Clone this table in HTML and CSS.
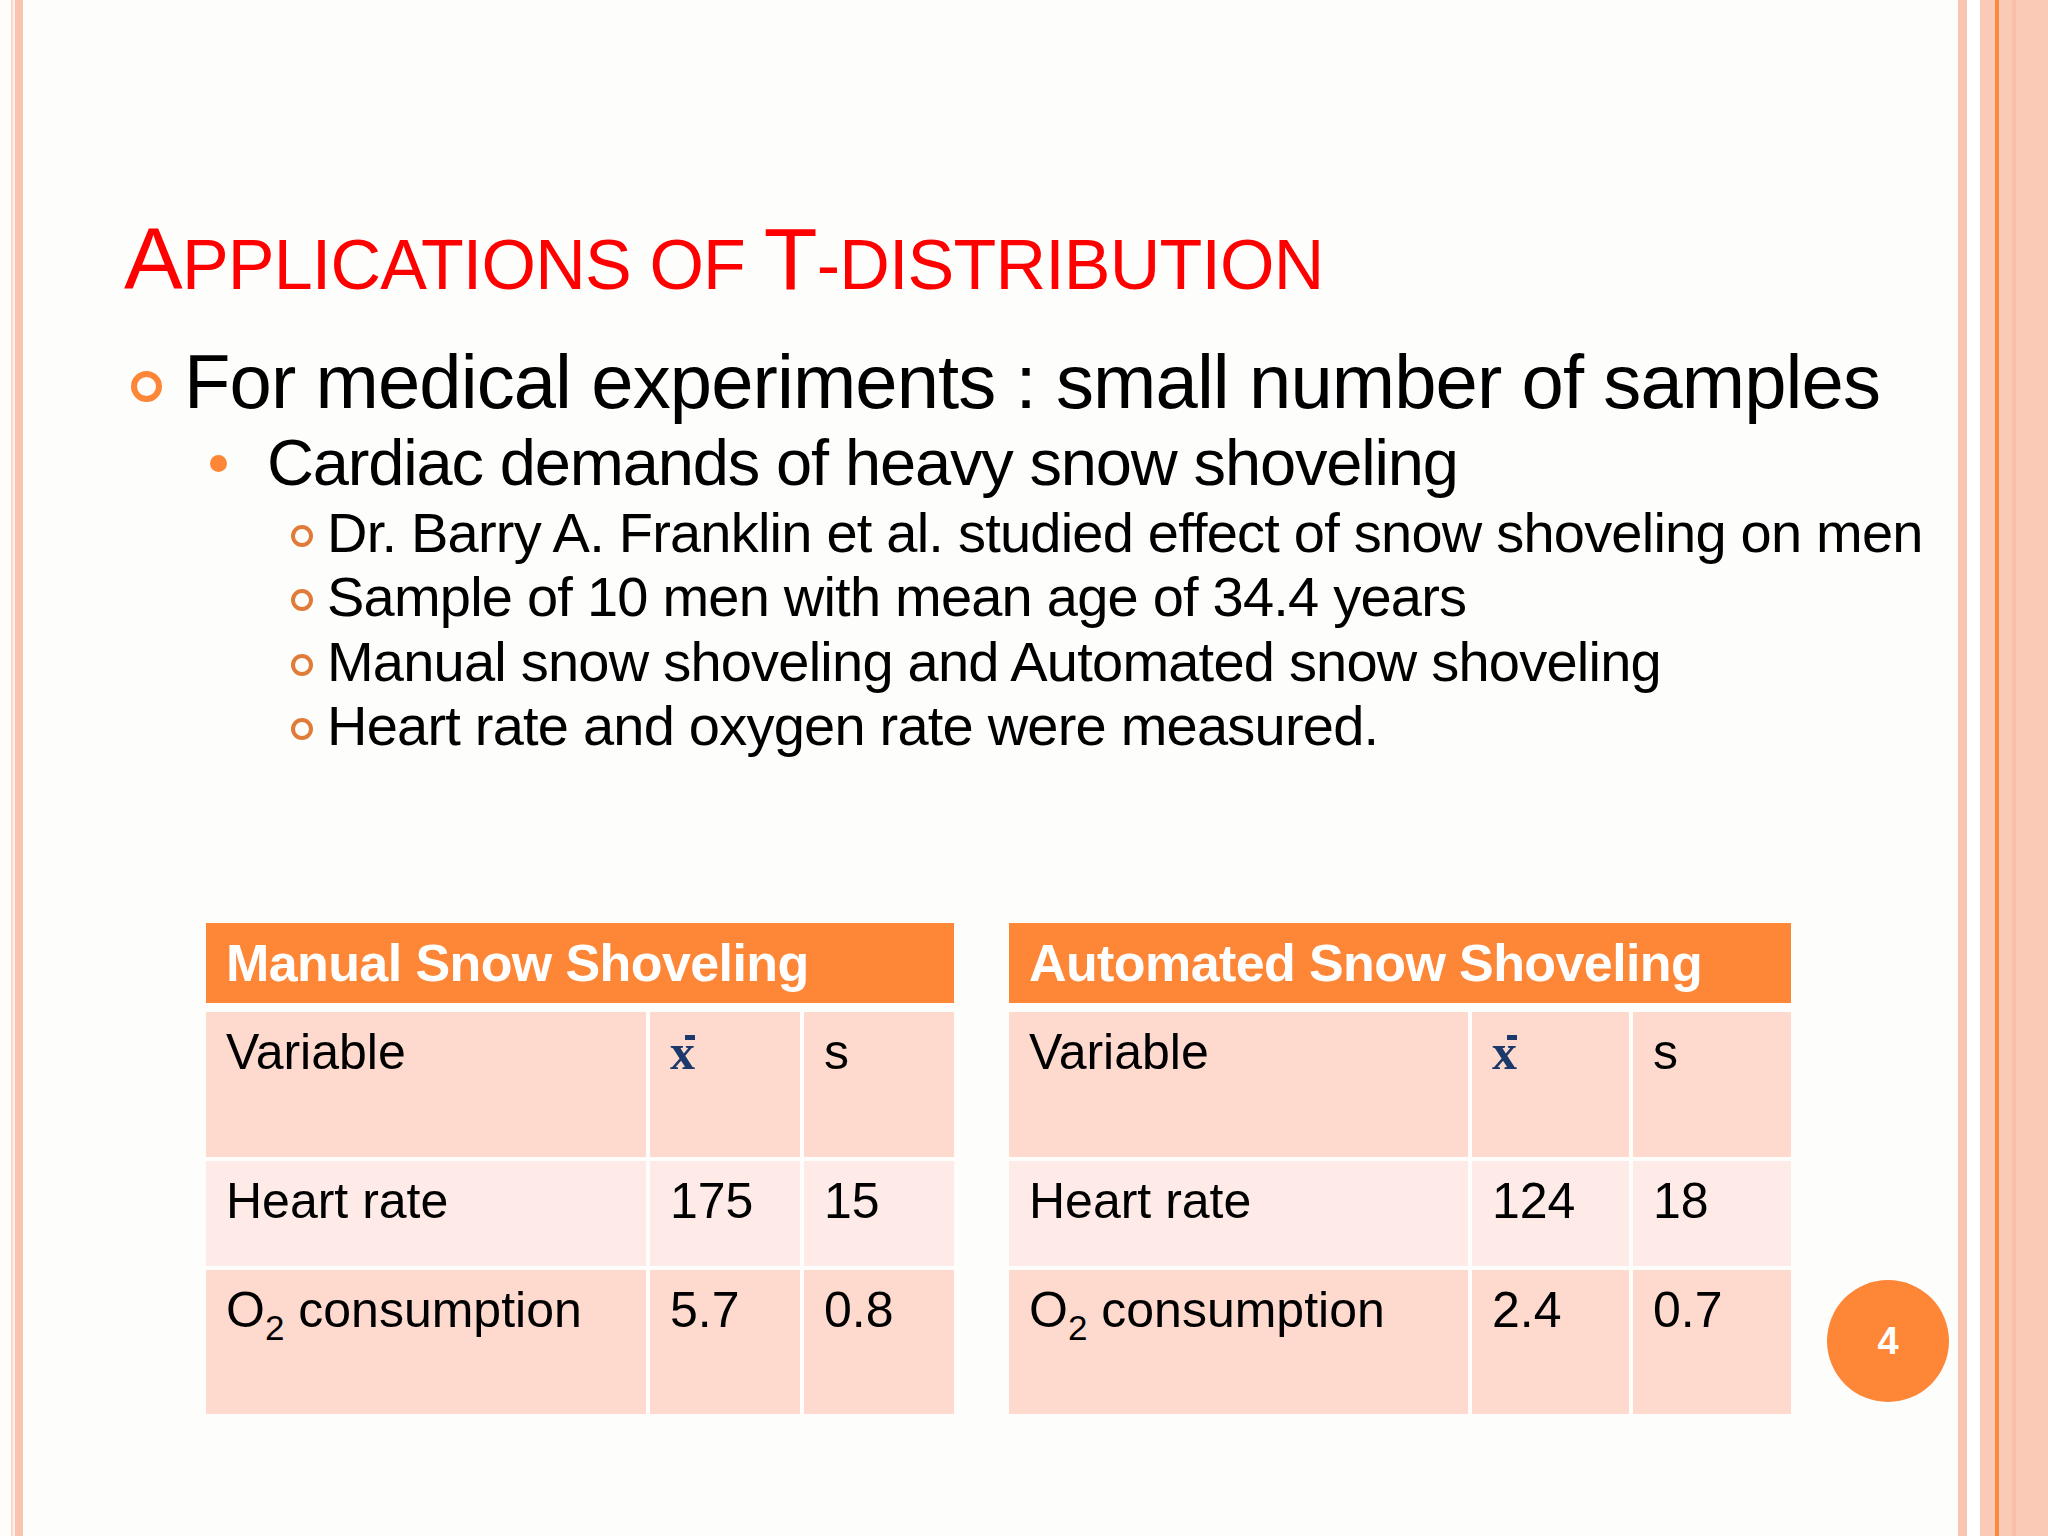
FILE: index.html
```html
<!DOCTYPE html>
<html lang="en">
<head>
<meta charset="utf-8">
<title>Applications of T-distribution</title>
<link rel="stylesheet" href="styles.css">
</head>
<body>
<div class="slide">
  <div class="frame-left">
    <div class="fl-gap"></div>
    <div class="fl-thin"></div>
    <div class="fl-light"></div>
    <div class="fl-thick"></div>
  </div>

  <main class="content">
    <h1 class="title">A<span class="sc">PPLICATIONS OF </span>T<span class="sc">-DISTRIBUTION</span></h1>

    <div class="item lvl1"><span class="mark ring-lg"></span><span class="txt">For medical experiments : small number of samples</span></div>
    <div class="item lvl2"><span class="mark dot"></span><span class="txt">Cardiac demands of heavy snow shoveling</span></div>
    <div class="lvl3-list">
      <div class="item lvl3"><span class="mark ring-sm"></span><span class="txt">Dr. Barry A. Franklin et al. studied effect of snow shoveling on men</span></div>
      <div class="item lvl3"><span class="mark ring-sm"></span><span class="txt">Sample of 10 men with mean age of 34.4 years</span></div>
      <div class="item lvl3"><span class="mark ring-sm"></span><span class="txt">Manual snow shoveling and Automated snow shoveling</span></div>
      <div class="item lvl3"><span class="mark ring-sm"></span><span class="txt">Heart rate and oxygen rate were measured.</span></div>
    </div>

    <div class="tables">
      <div class="tbl tbl-left">
        <div class="th">Manual Snow Shoveling</div>
        <div class="grid">
          <div class="cell">Variable</div>
          <div class="cell"><span class="xbar">x</span></div>
          <div class="cell">s</div>
          <div class="cell alt">Heart rate</div>
          <div class="cell alt">175</div>
          <div class="cell alt">15</div>
          <div class="cell">O<span class="sub">2</span> consumption</div>
          <div class="cell">5.7</div>
          <div class="cell">0.8</div>
        </div>
      </div>
      <div class="tbl tbl-right">
        <div class="th">Automated Snow Shoveling</div>
        <div class="grid">
          <div class="cell">Variable</div>
          <div class="cell"><span class="xbar">x</span></div>
          <div class="cell">s</div>
          <div class="cell alt">Heart rate</div>
          <div class="cell alt">124</div>
          <div class="cell alt">18</div>
          <div class="cell">O<span class="sub">2</span> consumption</div>
          <div class="cell">2.4</div>
          <div class="cell">0.7</div>
        </div>
      </div>
    </div>
  </main>

  <div class="frame-right">
    <div class="fr-a"></div>
    <div class="fr-white"></div>
    <div class="fr-b"></div>
    <div class="fr-line"></div>
    <div class="fr-c"></div>
    <div class="fr-dark"></div>
    <div class="fr-d"></div>
  </div>

  <div class="pagenum">4</div>
</div>
</body>
</html>
```

FILE: styles.css
```css
html, body {
  margin: 0;
  padding: 0;
}

body {
  width: 2048px;
  height: 1536px;
  overflow: hidden;
  background: #fdfdfb;
  font-family: "Liberation Sans", Arial, sans-serif;
  color: #000;
}

.slide {
  position: relative;
  display: flex;
  width: 2048px;
  height: 1536px;
}

/* left frame stripes */
.frame-left {
  display: flex;
  flex: none;
  width: 23px;
}
.fl-gap { width: 11px; }
.fl-thin { width: 2px; background: #fcd8cb; }
.fl-light { width: 2px; background: #fef1ec; }
.fl-thick { width: 8px; background: #f9c4ae; }

/* right frame stripes */
.frame-right {
  display: flex;
  flex: none;
  width: 90px;
}
.fr-a { width: 9px; background: #fac5b0; }
.fr-white { width: 13px; background: #ffffff; }
.fr-b { width: 15px; background: #fbcab7; }
.fr-line { width: 4px; background: #f98a40; }
.fr-c { width: 13px; background: #fbcab7; }
.fr-dark { width: 4px; background: #f8bfa8; }
.fr-d { flex: 1; background: #fbcab7; }

.content {
  flex: 1;
  min-width: 0;
  padding-top: 215px;
}

.title {
  margin: 0;
  padding-left: 101px;
  font-size: 88px;
  line-height: 88px;
  font-weight: normal;
  color: #ff0000;
  letter-spacing: -0.8px;
  white-space: nowrap;
}
.title .sc {
  font-size: 70px;
}

.item {
  display: flex;
  align-items: flex-start;
  white-space: nowrap;
}
.mark {
  flex: none;
  display: block;
  box-sizing: border-box;
  border-radius: 50%;
}

.lvl1 {
  margin-top: 35px;
  padding-left: 108px;
  font-size: 76px;
  line-height: 76px;
  letter-spacing: -0.9px;
}
.ring-lg {
  width: 31px;
  height: 31px;
  border: 6px solid #fd8637;
  margin-top: 27px;
  margin-right: 22px;
}

.lvl2 {
  margin-top: 10px;
  padding-left: 187px;
  font-size: 65px;
  line-height: 65px;
  letter-spacing: -1.15px;
}
.dot {
  width: 17px;
  height: 17px;
  background: #fd8637;
  margin-top: 25px;
  margin-right: 40px;
}

.lvl3-list {
  margin-top: 6px;
}
.lvl3 {
  padding-left: 268px;
  font-size: 56px;
  line-height: 64.4px;
  letter-spacing: -0.78px;
}
.ring-sm {
  width: 22px;
  height: 22px;
  border: 4px solid #e07b39;
  margin-top: 24px;
  margin-right: 14px;
}

/* tables */
.tables {
  display: flex;
  align-items: flex-start;
  gap: 55px;
  margin-top: 164px;
  padding-left: 183px;
}

.tbl {
  display: flex;
  flex-direction: column;
}

.th {
  height: 80px;
  margin-bottom: 9px;
  padding-left: 20px;
  background: #fd8637;
  color: #ffffff;
  font-weight: bold;
  font-size: 52px;
  line-height: 80px;
  letter-spacing: -0.6px;
  white-space: nowrap;
}

.grid {
  display: grid;
  grid-template-rows: 145px 105px 144px;
  gap: 4px;
}
.tbl-left .grid {
  grid-template-columns: 440px 150px 150px;
}
.tbl-right .grid {
  grid-template-columns: 459px 157px 158px;
}

.cell {
  box-sizing: border-box;
  padding: 10px 20px 0;
  background: #fdd9ce;
  font-size: 50px;
  line-height: 60px;
  white-space: nowrap;
}
.cell.alt {
  background: #feebe7;
}

.sub {
  font-size: 35px;
  line-height: 0;
  vertical-align: -13px;
}

.xbar {
  position: relative;
  display: inline-block;
  font-family: "Liberation Serif", "Times New Roman", serif;
  font-weight: bold;
  font-size: 50px;
  color: #1b3a6b;
}
.xbar::after {
  content: "";
  position: absolute;
  right: 0;
  top: 13px;
  width: 10px;
  height: 5px;
  background: #1b3a6b;
}

.pagenum {
  position: absolute;
  left: 1827px;
  top: 1280px;
  width: 122px;
  height: 122px;
  border-radius: 50%;
  background: #fd8637;
  color: #ffffff;
  font-weight: bold;
  font-size: 38px;
  display: flex;
  align-items: center;
  justify-content: center;
}
```
